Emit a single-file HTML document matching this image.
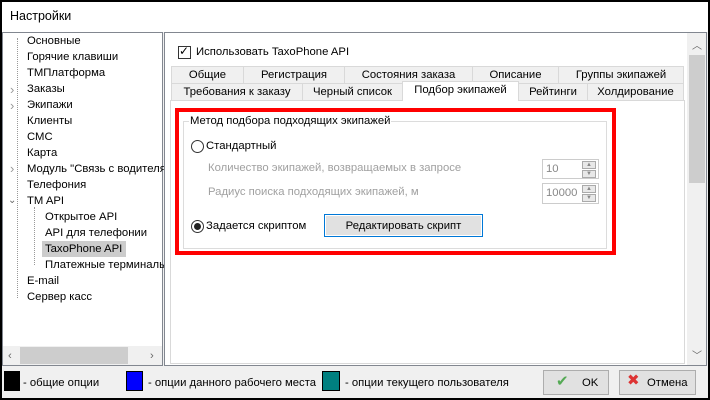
<!DOCTYPE html>
<html><head><meta charset="utf-8"><style>
*{margin:0;padding:0;box-sizing:border-box}
body{width:710px;height:400px;background:#000;font-family:"Liberation Sans",sans-serif;font-size:11.3px;color:#000;position:relative;overflow:hidden}
.a{position:absolute}
.win{left:2px;top:2px;width:706px;height:396px;background:#f0f0f0}
.t{position:absolute;white-space:nowrap;line-height:14px}
.tab{position:absolute;background:#f0f0f0;border:1px solid #d9d9d9;text-align:center;line-height:16px;white-space:nowrap}
.spin{position:absolute;border:1px solid #ccc;background:#fff;color:#888;padding-left:3px;line-height:18px}
.sb{position:absolute;right:2px;width:14px;height:8px;background:#e8e8e8;border:1px solid #aaa;font-size:6px;line-height:6px;text-align:center}
.g{color:#a0a0a0}
</style></head><body>
<div class="a win"></div>
<div class="a" style="left:2px;top:2px;width:706px;height:30px;background:#fff"></div>
<div class="t" style="left:10px;top:9px;font-size:12.5px">Настройки</div>
<!-- tree -->
<div class="a" style="left:2px;top:32px;width:161px;height:334px;background:#fff;border:1px solid #828790"></div>
<div class="a" style="left:17px;top:38px;height:260px;border-left:1px dotted #999"></div>
<div class="a" style="left:34px;top:207px;height:58px;border-left:1px dotted #999"></div>
<div class="a" style="left:42px;top:241px;width:84px;height:16px;background:#ccc"></div>
<div class="t" style="left:27px;top:33px;line-height:16px">
<div>Основные</div><div>Горячие клавиши</div><div>ТМПлатформа</div><div>Заказы</div><div>Экипажи</div><div>Клиенты</div><div>СМС</div><div>Карта</div><div>Модуль "Связь с водителя</div><div>Телефония</div><div>TM API</div>
<div style="padding-left:18px">Открытое API</div><div style="padding-left:18px">API для телефонии</div><div style="padding-left:18px">TaxoPhone API</div><div style="padding-left:18px">Платежные терминалы</div>
<div>E-mail</div><div>Сервер касс</div></div>
<div class="t" style="left:10px;top:82px;line-height:16px;color:#999;font-size:13px"><div>›</div><div>›</div></div>
<div class="t" style="left:10px;top:162px;color:#999;font-size:13px">›</div>
<div class="t" style="left:8px;top:194px;color:#666;font-size:10px">⌄</div>
<div class="a" style="left:3px;top:346px;width:159px;height:19px;background:#f0f0f0"></div>
<div class="a" style="left:20px;top:347px;width:108px;height:17px;background:#cdcdcd"></div>
<div class="t" style="left:8px;top:349px;color:#666">‹</div>
<div class="t" style="left:150px;top:349px;color:#666">›</div>
<!-- right panel -->
<div class="a" style="left:164px;top:32px;width:543px;height:334px;background:#fff;border:1px solid #828790"></div>
<div class="a" style="left:687px;top:33px;width:19px;height:332px;background:#f0f0f0"></div>
<div class="a" style="left:689px;top:55px;width:16px;height:128px;background:#cdcdcd"></div>
<div class="t" style="left:692px;top:40px;color:#666;font-size:10px">︿</div>
<div class="t" style="left:692px;top:350px;color:#666;font-size:10px">﹀</div>
<div class="a" style="left:178px;top:46px;width:13px;height:13px;border:1px solid #333;background:#fff"></div>
<div class="t" style="left:179px;top:44px;font-size:12px">✓</div>
<div class="t" style="left:196px;top:45px">Использовать TaxoPhone API</div>
<!-- tabs -->
<div class="tab" style="left:171px;top:66px;width:73px;height:18px">Общие</div>
<div class="tab" style="left:243px;top:66px;width:102px;height:18px">Регистрация</div>
<div class="tab" style="left:344px;top:66px;width:129px;height:18px">Состояния заказа</div>
<div class="tab" style="left:472px;top:66px;width:87px;height:18px">Описание</div>
<div class="tab" style="left:558px;top:66px;width:126px;height:18px">Группы экипажей</div>
<div class="a" style="left:170px;top:100px;width:515px;height:264px;background:#fff;border:1px solid #d9d9d9"></div>
<div class="tab" style="left:171px;top:83px;width:132px;height:18px">Требования к заказу</div>
<div class="tab" style="left:302px;top:83px;width:101px;height:18px">Черный список</div>
<div class="tab" style="left:402px;top:81px;width:117px;height:20px;background:#fff;border-bottom:none">Подбор экипажей</div>
<div class="tab" style="left:518px;top:83px;width:70px;height:18px">Рейтинги</div>
<div class="tab" style="left:587px;top:83px;width:97px;height:18px">Холдирование</div>
<!-- red box -->
<div class="a" style="left:175px;top:108px;width:441px;height:147px;border:4px solid #f00"></div>
<div class="a" style="left:183px;top:121px;width:424px;height:128px;border:1px solid #dcdcdc"></div>
<div class="t" style="left:189px;top:114px;background:#fff;padding:0 1px">Метод подбора подходящих экипажей</div>
<div class="a" style="left:191px;top:140px;width:13px;height:13px;border:1px solid #333;border-radius:50%;background:#fff"></div>
<div class="t" style="left:206px;top:139px">Стандартный</div>
<div class="t g" style="left:208px;top:161px">Количество экипажей, возвращаемых в запросе</div>
<div class="t g" style="left:208px;top:185px">Радиус поиска подходящих экипажей, м</div>
<div class="spin" style="left:542px;top:159px;width:57px;height:20px">10<div class="sb" style="top:1px">▲</div><div class="sb" style="top:10px">▼</div></div>
<div class="spin" style="left:542px;top:183px;width:57px;height:21px">10000<div class="sb" style="top:1px">▲</div><div class="sb" style="top:10px">▼</div></div>
<div class="a" style="left:191px;top:220px;width:13px;height:13px;border:1px solid #333;border-radius:50%;background:#fff"></div>
<div class="a" style="left:194px;top:223px;width:7px;height:7px;border-radius:50%;background:#222"></div>
<div class="t" style="left:206px;top:219px">Задается скриптом</div>
<div class="a" style="left:324px;top:214px;width:159px;height:23px;border:1px solid #0078d7;background:#e1e1e1;box-shadow:inset 0 0 0 1px #fff"></div>
<div class="t" style="left:324px;top:219px;width:159px;text-align:center">Редактировать скрипт</div>
<!-- bottom -->
<div class="a" style="left:4px;top:371px;width:16px;height:20px;background:#000"></div>
<div class="t" style="left:23px;top:376px">- общие опции</div>
<div class="a" style="left:126px;top:371px;width:17px;height:20px;background:#00f;border:1px solid #000"></div>
<div class="t" style="left:148px;top:376px">- опции данного рабочего места</div>
<div class="a" style="left:322px;top:371px;width:18px;height:20px;background:#008080;border:1px solid #000"></div>
<div class="t" style="left:345px;top:376px">- опции текущего пользователя</div>
<div class="a" style="left:543px;top:370px;width:66px;height:25px;border:1px solid #adadad;background:#e1e1e1"></div>
<div class="t" style="left:556px;top:375px;color:#5a5;font-size:15px">✔</div>
<div class="t" style="left:582px;top:376px">OK</div>
<div class="a" style="left:619px;top:370px;width:77px;height:25px;border:1px solid #adadad;background:#e1e1e1"></div>
<div class="t" style="left:627px;top:374px;color:#d33;font-size:15px">✖</div>
<div class="t" style="left:647px;top:376px">Отмена</div>
</body></html>
